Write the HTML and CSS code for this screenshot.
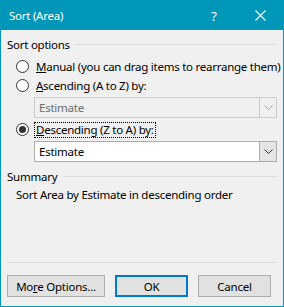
FILE: index.html
```html
<!DOCTYPE html>
<html lang="en">
<head>
    <meta charset="UTF-8">
    <title>Sort (Area)</title>
    <link rel="stylesheet" href="styles.css">
</head>
<body>
    <div class="window">
        <div class="titlebar">
            <span class="title">Sort (Area)</span>
            <span class="help">?</span>
            <span class="close">
                <svg width="11" height="11" viewBox="0 0 11 11"><path d="M0.5 0.5 L10.5 10.5 M10.5 0.5 L0.5 10.5" stroke="#fff" stroke-width="1.1" fill="none"/></svg>
            </span>
        </div>

        <div class="content">
            <div class="group-head first">
                <span>Sort options</span>
                <span class="rule"></span>
            </div>

            <div class="radio-row">
                <span class="radio"></span>
                <span class="label"><u>M</u>anual (you can drag items to rearrange them)</span>
            </div>
            <div class="radio-row">
                <span class="radio"></span>
                <span class="label"><u>A</u>scending (A to Z) by:</span>
            </div>
            <div class="combo disabled">
                <span class="value">Estimate</span>
                <span class="drop">
                    <svg width="9" height="5" viewBox="0 0 9 5"><polyline points="0.5,0.5 4.5,4.5 8.5,0.5" stroke="#a0a0a0" fill="none"/></svg>
                </span>
            </div>
            <div class="radio-row">
                <span class="radio checked"></span>
                <span class="label focused"><u>D</u>escending (Z to A) by:</span>
            </div>
            <div class="combo">
                <span class="value">Estimate</span>
                <span class="drop">
                    <svg width="9" height="5" viewBox="0 0 9 5"><polyline points="0.5,0.5 4.5,4.5 8.5,0.5" stroke="#333" fill="none"/></svg>
                </span>
            </div>

            <div class="group-head">
                <span>Summary</span>
                <span class="rule"></span>
            </div>
            <p class="summary">Sort Area by Estimate in descending order</p>

            <div class="spacer"></div>
            <div class="separator"></div>

            <div class="buttons">
                <button class="btn more">Mo<u>r</u>e Options...</button>
                <button class="btn ok">OK</button>
                <button class="btn cancel">Cancel</button>
            </div>
        </div>
    </div>
</body>
</html>
```

FILE: styles.css
```css
html, body {
    margin: 0;
    padding: 0;
}

body {
    font-family: 'Noto Sans', 'Open Sans', sans-serif;
    font-size: 11.5px;
    letter-spacing: -0.25px;
    color: #000;
    background: #f0f0f0;
    white-space: nowrap;
}

.window {
    width: 284px;
    height: 307px;
    box-sizing: border-box;
    border: 1px solid #0097b9;
    background: #f0f0f0;
    display: flex;
    flex-direction: column;
}

.titlebar {
    height: 29px;
    background: #0097b9;
    color: #fff;
    display: flex;
    align-items: center;
    padding-left: 8px;
    flex-shrink: 0;
}

.title {
    flex: 1;
}

.help {
    width: 46px;
    text-align: center;
    font-size: 13px;
}

.close {
    width: 46px;
    display: flex;
    justify-content: center;
    align-items: center;
}

.content {
    flex: 1;
    display: flex;
    flex-direction: column;
    padding: 0 6px 9px 6px;
}

.group-head {
    display: flex;
    align-items: center;
    height: 16px;
    margin-top: 4px;
}

.group-head.first {
    margin-top: 6px;
}

.group-head .rule {
    flex: 1;
    border-top: 1px solid #dcdcdc;
    margin-left: 6px;
    margin-top: 1px;
}

.radio-row {
    display: flex;
    align-items: center;
    height: 19px;
    padding-left: 9px;
}

.group-head + .radio-row {
    margin-top: 5px;
}

.radio {
    width: 11px;
    height: 11px;
    border: 1px solid #333;
    border-radius: 50%;
    background: #fff;
    margin-right: 5px;
    position: relative;
    flex-shrink: 0;
}

.radio.checked::after {
    content: "";
    position: absolute;
    left: 2px;
    top: 2px;
    width: 7px;
    height: 7px;
    border-radius: 50%;
    background: #333;
}

.label {
    padding: 0 1px;
    border: 1px dotted transparent;
    line-height: 14px;
}

.label.focused {
    border-color: #000;
}

.combo {
    display: flex;
    height: 21px;
    box-sizing: border-box;
    margin: 2px 0 2px 27px;
    border: 1px solid #adadad;
    background: #fff;
}

.combo .value {
    flex: 1;
    padding-left: 4px;
    line-height: 19px;
}

.combo .drop {
    width: 16px;
    border-left: 1px solid #adadad;
    background: #e5e5e5;
    display: flex;
    align-items: center;
    justify-content: center;
}

.combo.disabled {
    background: #f0f0f0;
    border-color: #cccccc;
    color: #6d6d6d;
}

.combo.disabled .drop {
    background: #f0f0f0;
    border-left-color: #cccccc;
}

.summary {
    margin: 3px 0 0 9px;
    line-height: 16px;
}

.spacer {
    flex: 1;
}

.separator {
    border-top: 1px solid #dcdcdc;
    margin-bottom: 12px;
}

.buttons {
    display: flex;
    gap: 10px;
}

.btn {
    height: 22px;
    font-family: inherit;
    font-size: 11.5px;
    letter-spacing: -0.25px;
    background: #e1e1e1;
    border: 1px solid #adadad;
    padding: 0;
    color: #000;
}

.btn.more {
    width: 98px;
}

.btn.ok {
    width: 73px;
    border: 2px solid #0078d7;
}

.btn.cancel {
    width: 73px;
}
```
